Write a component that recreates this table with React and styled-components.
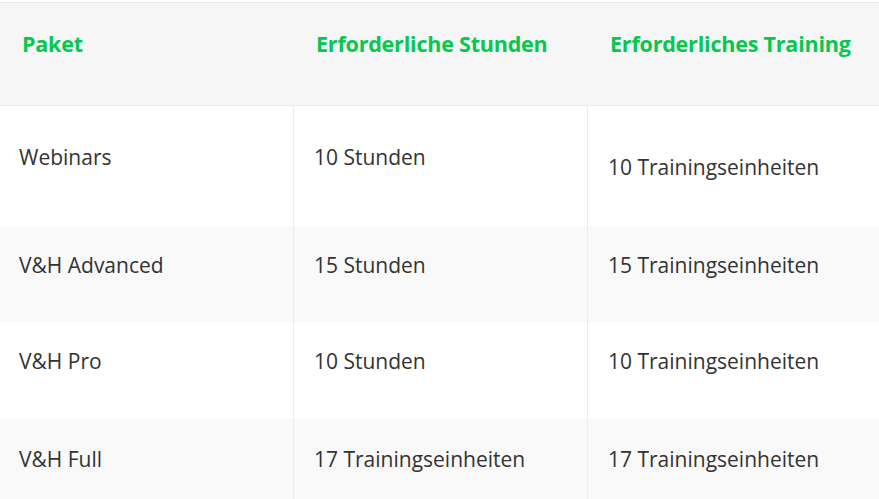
import React from 'react';
import styled, { createGlobalStyle } from 'styled-components';

const GlobalStyle = createGlobalStyle`
  html, body {
    margin: 0;
    padding: 0;
    background: #ffffff;
  }
  body {
    font-family: "Open Sans", "Noto Sans", sans-serif;
  }
`;

const Table = styled.div`
  margin-top: 2px;
  border-top: 1px solid #ececec;
  display: grid;
  grid-template-columns: 293px 294px 1fr;
  width: 879px;
`;

const HeadCell = styled.div`
  background: #f6f6f6;
  height: 103px;
  box-sizing: border-box;
  padding: 26px 0 0 ${(p) => p.$indent}px;
  border-bottom: 1px solid #ececec;
  color: #06c74f;
  font-weight: 700;
  font-size: 21.5px;
  line-height: 30px;
  letter-spacing: -0.2px;
`;

const Cell = styled.div`
  background: ${(p) => (p.$shade ? '#f9f9f9' : '#ffffff')};
  height: ${(p) => p.$height}px;
  box-sizing: border-box;
  padding: ${(p) => p.$top}px 0 0 ${(p) => p.$indent}px;
  border-left: ${(p) => (p.$first ? 'none' : '1px solid #ececec')};
  color: #333333;
  font-size: 21px;
  line-height: 30px;
`;

const headers = [
  { text: 'Paket', indent: 22 },
  { text: 'Erforderliche Stunden', indent: 23 },
  { text: 'Erforderliches Training', indent: 23 },
];

const rows = [
  { height: 120, cells: ['Webinars', '10 Stunden', '10 Trainingseinheiten'], tops: [36, 36, 46] },
  { height: 96, cells: ['V&H Advanced', '15 Stunden', '15 Trainingseinheiten'], tops: [24, 24, 24] },
  { height: 97, cells: ['V&H Pro', '10 Stunden', '10 Trainingseinheiten'], tops: [24, 24, 24] },
  { height: 96, cells: ['V&H Full', '17 Trainingseinheiten', '17 Trainingseinheiten'], tops: [25, 25, 25] },
];

const indents = [19, 20, 20];

export default function App() {
  return (
    <>
      <GlobalStyle />
      <Table>
        {headers.map((h) => (
          <HeadCell key={h.text} $indent={h.indent}>{h.text}</HeadCell>
        ))}
        {rows.map((row, r) => row.cells.map((c, i) => (
          <Cell
            key={`${r}-${i}`}
            $shade={r % 2 === 1}
            $height={row.height}
            $top={row.tops[i]}
            $indent={indents[i]}
            $first={i === 0}
          >
            {c}
          </Cell>
        )))}
      </Table>
    </>
  );
}
